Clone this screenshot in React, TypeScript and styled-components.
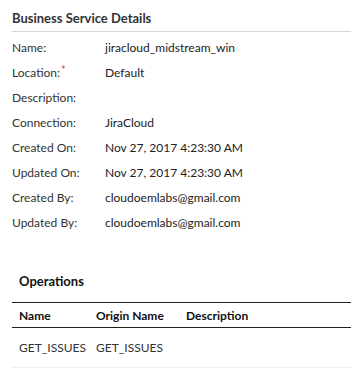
import React from 'react'
import styled, {createGlobalStyle} from 'styled-components'

const GlobalStyle = createGlobalStyle`
  body {
    margin: 0;
    background: #fff;
    font-family: Lato, "Open Sans", sans-serif;
    color: #333;
  }
`

const Panel = styled.div`
  width: 351px;
  padding-left: 12px;
  box-sizing: border-box;
`

const Title = styled.h2`
  margin: 0;
  padding-top: 11px;
  height: 20px;
  line-height: 14px;
  font-size: 13px;
  font-weight: 700;
  color: #333;
  border-bottom: 1px solid #d6d6d6;
`

const Details = styled.div`
  display: grid;
  grid-template-columns: 93px 1fr;
  grid-auto-rows: 25px;
  padding-top: 3px;
`

const Label = styled.div`
  font-size: 12px;
  line-height: 25px;
  color: #333;
`

const Required = styled.span`
  color: #e23b3b;
  margin-left: 1px;
  line-height: 0;
  vertical-align: 3px;
  font-size: 11px;
`

const Value = styled.div`
  font-size: 12px;
  line-height: 25px;
  color: #222;
`

const SectionTitle = styled.h3`
  margin: 0;
  padding: 39px 0 0 7px;
  height: 28px;
  line-height: 14px;
  font-size: 13px;
  font-weight: 700;
  color: #111;
`

const Table = styled.table`
  width: 100%;
  table-layout: fixed;
  border-collapse: collapse;
  font-size: 12px;
`

const HeadCell = styled.th<{$width?: number}>`
  text-align: left;
  font-weight: 700;
  color: #111;
  height: 24px;
  padding: 0 0 0 7px;
  width: ${p => (p.$width ? `${p.$width}px` : 'auto')};
  border-top: 1px solid #222;
  border-bottom: 1px solid #222;
  white-space: nowrap;
`

const Cell = styled.td`
  height: 39px;
  padding: 0 0 0 7px;
  color: #333;
  border-bottom: 1px solid #eee;
  white-space: nowrap;
`

const details: [string, string, boolean?][] = [
  ['Name:', 'jiracloud_midstream_win'],
  ['Location:', 'Default', true],
  ['Description:', ''],
  ['Connection:', 'JiraCloud'],
  ['Created On:', 'Nov 27, 2017 4:23:30 AM'],
  ['Updated On:', 'Nov 27, 2017 4:23:30 AM'],
  ['Created By:', 'cloudoemlabs@gmail.com'],
  ['Updated By:', 'cloudoemlabs@gmail.com'],
]

export default function App() {
  return (
    <>
      <GlobalStyle/>
      <Panel>
        <Title>Business Service Details</Title>
        <Details>
          {details.map(([label, value, required]) => (
            <React.Fragment key={label}>
              <Label>{label}{required && <Required>*</Required>}</Label>
              <Value>{value}</Value>
            </React.Fragment>
          ))}
        </Details>
        <SectionTitle>Operations</SectionTitle>
        <Table>
          <thead>
            <tr>
              <HeadCell $width={70}>Name</HeadCell>
              <HeadCell $width={83}>Origin Name</HeadCell>
              <HeadCell>Description</HeadCell>
            </tr>
          </thead>
          <tbody>
            <tr>
              <Cell>GET_ISSUES</Cell>
              <Cell>GET_ISSUES</Cell>
              <Cell></Cell>
            </tr>
          </tbody>
        </Table>
      </Panel>
    </>
  )
}
